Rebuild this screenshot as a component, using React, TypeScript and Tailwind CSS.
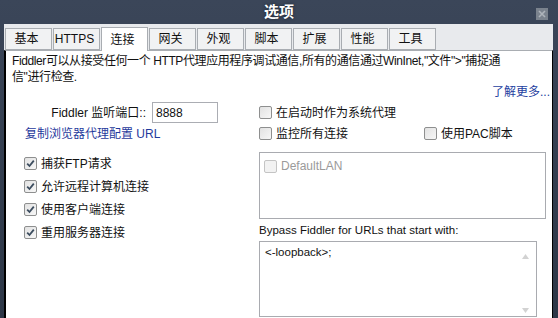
import React from "react";

const tabs = ["基本", "HTTPS", "连接", "网关", "外观", "脚本", "扩展", "性能", "工具"];

function Check({ checked = false, disabled = false }: { checked?: boolean; disabled?: boolean }) {
  return (
    <span
      className={
        "relative inline-flex h-[13px] w-[13px] shrink-0 items-center justify-center rounded-[2px] border " +
        (disabled
          ? "border-[#c4c4c4] bg-[#f2f2f2]"
          : "border-[#8e8f8f] bg-gradient-to-br from-[#e2e2e2] to-[#f7f7f7]")
      }
    >
      {checked && (
        <svg width="9" height="9" viewBox="0 0 9 9" className="block">
          <path d="M1.2 4.6 L3.5 7 L7.8 1.6" fill="none" stroke="#3c4d5f" strokeWidth="1.8" />
        </svg>
      )}
    </span>
  );
}

function CheckRow({ label, checked, className = "" }: { label: string; checked?: boolean; className?: string }) {
  return (
    <div className={"flex items-center gap-[4px] " + className}>
      <Check checked={checked} />
      <span>{label}</span>
    </div>
  );
}

export default function App() {
  return (
    <div className="flex h-[318px] w-[558px] flex-col overflow-hidden bg-gradient-to-b from-[#3b4659] to-[#2d3747] font-['Liberation_Sans','Noto_Sans_CJK_SC',sans-serif] text-[12px] text-[#111]">
      {/* title bar */}
      <div className="relative flex h-[24px] shrink-0 items-center justify-center">
        <span className="text-[15px] font-bold text-white [text-shadow:0_0_3px_#1a2230]">选项</span>
        <span className="absolute right-[10px] top-[8px] flex h-[12px] w-[12px] items-center justify-center bg-[#7a828d]">
          <svg width="8" height="8" viewBox="0 0 8 8">
            <path d="M1 1 L7 7 M7 1 L1 7" stroke="#aeb4bb" strokeWidth="1.6" />
          </svg>
        </span>
      </div>

      <div className="flex min-h-0 flex-1 flex-col pl-[4px] pr-[5px]">
        {/* tab strip */}
        <div className="flex h-[26px] shrink-0 items-end gap-[1px] bg-[#e8eaed] pl-[1px]">
          {tabs.map((t) => {
            const active = t === "连接";
            return (
              <div
                key={t}
                className={
                  "flex w-[47px] items-center justify-center border border-[#a9adb2] pr-[4px] text-[12px] " +
                  (active
                    ? "relative z-10 -mb-[1px] h-[24px] border-b-0 bg-white"
                    : "h-[22px] bg-[#f1f2f3]")
                }
              >
                {t}
              </div>
            );
          })}
        </div>

        {/* content */}
        <div className="flex min-h-0 flex-1 flex-col border-l-2 border-r border-t border-l-black border-r-black border-t-[#a9adb2] bg-white">
          <div className="px-[6px] pt-[2px] leading-[16px]">
            <div className="whitespace-nowrap tracking-[-0.4px]">
              Fiddler可以从接受任何一个 HTTP代理应用程序调试通信,所有的通信通过WinInet,"文件"&gt;"捕捉通
            </div>
            <div className="whitespace-nowrap tracking-[-0.4px]">信"进行检查.</div>
          </div>
          <div className="flex h-[14px] justify-end pr-[2px] leading-[14px] text-[#2440a0]">了解更多...</div>

          <div className="mt-[3px] grid grid-cols-[253px_1fr]">
            {/* left column */}
            <div className="flex flex-col">
              <div className="flex h-[21px] items-center">
                <span className="w-[140px] text-right">Fiddler 监听端口::</span>
                <div className="ml-[6px] flex h-[21px] w-[66px] items-center border border-[#abadb3] pl-[3px]">8888</div>
              </div>
              <div className="flex h-[21px] items-center pl-[19px] text-[#1f3a9c]">复制浏览器代理配置 URL</div>
              <div className="mt-[8px] flex flex-col pl-[18px]">
                <CheckRow label="捕获FTP请求" checked className="h-[23px]" />
                <CheckRow label="允许远程计算机连接" checked className="h-[23px]" />
                <CheckRow label="使用客户端连接" checked className="h-[23px]" />
                <CheckRow label="重用服务器连接" checked className="h-[23px]" />
              </div>
            </div>

            {/* right column */}
            <div className="flex flex-col">
              <CheckRow label="在启动时作为系统代理" className="h-[21px]" />
              <div className="flex h-[21px] items-center">
                <CheckRow label="监控所有连接" className="w-[165px]" />
                <CheckRow label="使用PAC脚本" />
              </div>
              <div className="mt-[8px] h-[67px] w-[287px] border border-[#a9abb0] pl-[4px] pt-[4px]">
                <div className="flex items-center gap-[4px] text-[#9a9a9a]">
                  <Check disabled />
                  <span>DefaultLAN</span>
                </div>
              </div>
              <div className="mt-[4px] h-[14px] text-[11.5px] leading-[14px]">Bypass Fiddler for URLs that start with:</div>
              <div className="relative mt-[4px] h-[76px] w-[278px] border border-[#a9abb0] pl-[5px] pt-[2px] text-[11.5px]">
                &lt;-loopback&gt;;
                <svg className="absolute right-[7px] top-[12px]" width="7" height="5" viewBox="0 0 7 5">
                  <path d="M0 5 L3.5 0 L7 5 Z" fill="#d2d2d2" />
                </svg>
                <svg className="absolute bottom-[3px] right-[7px]" width="7" height="5" viewBox="0 0 7 5">
                  <path d="M0 0 L3.5 5 L7 0 Z" fill="#d2d2d2" />
                </svg>
              </div>
            </div>
          </div>
        </div>
      </div>
    </div>
  );
}
